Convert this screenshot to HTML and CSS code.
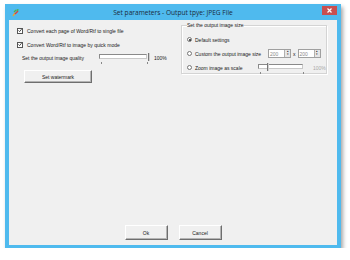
FILE: index.html
```html
<!DOCTYPE html>
<html lang="en">
<head>
    <meta charset="utf-8">
    <title>Set parameters - Output tpye: JPEG File</title>
    <link rel="stylesheet" href="styles.css">
</head>
<body>

    <div class="window">
        <div class="titlebar">
            <svg class="app-icon" width="8" height="8" viewBox="0 0 8 8">
                <path d="M1 7 L3 4" stroke="#e2a23a" stroke-width="1.4"/>
                <path d="M3 5 L6 2" stroke="#d9453b" stroke-width="1.4"/>
                <path d="M4.5 1.5 L6.5 0.5" stroke="#4caf50" stroke-width="1.4"/>
                <path d="M2 3 L4 1" stroke="#4caf50" stroke-width="1.2"/>
            </svg>
            <span class="title">Set parameters - Output tpye: JPEG File</span>
            <span class="close">
                <svg width="5" height="5" viewBox="0 0 5 5">
                    <path d="M0.5 0.5 L4.5 4.5 M4.5 0.5 L0.5 4.5" stroke="#fff" stroke-width="1.2"/>
                </svg>
            </span>
        </div>

        <div class="content">
            <div class="panes">
                <div class="left">
                    <div class="check-row">
                        <span class="checkbox"><svg width="5" height="5" viewBox="0 0 5 5"><path d="M0.6 2.4 L2 3.9 L4.5 0.8" stroke="#222" stroke-width="1" fill="none"/></svg></span>
                        <span>Convert each page of Word/Rtf to single file</span>
                    </div>
                    <div class="check-row second">
                        <span class="checkbox"><svg width="5" height="5" viewBox="0 0 5 5"><path d="M0.6 2.4 L2 3.9 L4.5 0.8" stroke="#222" stroke-width="1" fill="none"/></svg></span>
                        <span>Convert Word/Rtf to image by quick mode</span>
                    </div>
                    <div class="quality-row">
                        <span class="quality-label">Set the output image quality</span>
                        <div class="slider quality">
                            <div class="track"></div>
                            <span class="thumb at-end"></span>
                            <span class="tick left-tick"></span>
                            <span class="tick right-tick"></span>
                        </div>
                        <span class="value">100%</span>
                    </div>
                    <button class="btn watermark">Set watermark</button>
                </div>

                <div class="group">
                    <span class="legend">Set the output image size</span>
                    <div class="radio-row first">
                        <span class="radio checked"></span>
                        <span>Default settings</span>
                    </div>
                    <div class="radio-row">
                        <span class="radio"></span>
                        <span class="radio-text custom">Custom the output image size</span>
                        <span class="spin"><span class="spin-val">200</span><span class="spin-btn">&#9652;<br>&#9662;</span></span>
                        <span class="times">x</span>
                        <span class="spin"><span class="spin-val">200</span><span class="spin-btn">&#9652;<br>&#9662;</span></span>
                    </div>
                    <div class="radio-row">
                        <span class="radio"></span>
                        <span class="radio-text zoom">Zoom image as scale</span>
                        <div class="slider scale">
                            <div class="track"></div>
                            <span class="thumb near-start"></span>
                            <span class="tick left-tick"></span>
                            <span class="tick right-tick"></span>
                        </div>
                        <span class="value muted">100%</span>
                    </div>
                </div>
            </div>

            <div class="actions">
                <button class="btn action">Ok</button>
                <button class="btn action">Cancel</button>
            </div>
        </div>
    </div>

</body>
</html>
```

FILE: styles.css
```css
* {
    margin: 0;
    padding: 0;
    box-sizing: border-box;
}

body {
    font-family: 'Liberation Sans', Arial, sans-serif;
    background-color: #ffffff;
    color: #1a1a1a;
    overflow: hidden;
    white-space: nowrap;
}

.window {
    margin: 4px 0 0 5px;
    width: 336px;
    height: 244px;
    background-color: #4fbaee;
    display: flex;
    flex-direction: column;
    box-shadow: 2px 3px 4px rgba(0, 0, 0, 0.35);
}

.titlebar {
    height: 16px;
    display: flex;
    align-items: flex-start;
    position: relative;
}

.app-icon {
    margin: 5px 0 0 7px;
}

.title {
    position: absolute;
    left: 0;
    right: 0;
    top: 4px;
    text-align: center;
    font-family: 'Open Sans', 'Liberation Sans', sans-serif;
    font-size: 6.6px;
    color: #1b2a3a;
}

.close {
    margin: 2px 4px 0 auto;
    width: 15px;
    height: 9px;
    background-color: #c94f4f;
    display: flex;
    align-items: center;
    justify-content: center;
    position: relative;
}

.content {
    flex: 1;
    margin: 0 4px 3px 4px;
    background-color: #f0f0f0;
    display: flex;
    flex-direction: column;
    font-size: 5px;
}

.panes {
    display: flex;
    flex: 1;
}

.left {
    width: 172px;
    padding: 7px 0 0 8px;
}

.check-row {
    display: flex;
    align-items: center;
    height: 7px;
    gap: 4px;
}

.check-row.second {
    margin-top: 7px;
}

.checkbox {
    width: 6px;
    height: 6px;
    border: 1px solid #555;
    background-color: #fff;
    display: flex;
    align-items: center;
    justify-content: center;
}

.quality-row {
    display: flex;
    align-items: center;
    height: 9px;
    margin-top: 5px;
    padding-left: 5px;
}

.quality-label {
    width: 77px;
}

.slider {
    position: relative;
    height: 9px;
}

.slider.quality {
    width: 51px;
}

.slider.scale {
    width: 48px;
}

.track {
    position: absolute;
    left: 0;
    right: 3px;
    top: 1px;
    height: 5px;
    background-color: #fff;
    border: 1px solid #c8c8c8;
    border-top-color: #8a8a8a;
    border-left-color: #8a8a8a;
}

.thumb {
    position: absolute;
    top: 0;
    width: 2px;
    height: 8px;
    background-color: #fdfdfd;
    border-left: 1px solid #777;
    border-right: 1px solid #d0d0d0;
}

.thumb.at-end {
    right: 0;
}

.thumb.near-start {
    left: 9px;
}

.tick {
    position: absolute;
    top: 9px;
    width: 1px;
    height: 2px;
    background-color: #888;
}

.left-tick {
    left: 2px;
}

.right-tick {
    right: 2px;
}

.value {
    margin-left: 4px;
}

.value.muted {
    color: #a8a8a8;
}

.btn {
    font-family: 'Liberation Sans', Arial, sans-serif;
    font-size: 5px;
    color: #1a1a1a;
    background-color: #f0f0f0;
    border: 1px solid;
    border-color: #ffffff #6e6e6e #6e6e6e #ffffff;
    box-shadow: inset -1px -1px 0 #b4b4b4;
}

.watermark {
    display: block;
    width: 68px;
    height: 13px;
    margin: 8px 0 0 7px;
}

.group {
    width: 146px;
    height: 49px;
    margin-top: 5px;
    border: 1px solid #d4d4d4;
    box-shadow: inset 1px 1px 0 #fff, 1px 1px 0 #fff;
    padding: 0 0 0 5px;
}

.legend {
    display: inline-block;
    margin-top: -4px;
    background-color: #f0f0f0;
    padding-right: 1px;
    line-height: 6px;
    vertical-align: top;
}

.radio-row {
    display: flex;
    align-items: center;
    height: 9px;
    margin-top: 5px;
    gap: 3px;
}

.radio-row.first {
    margin-top: 3px;
}

.radio {
    width: 5px;
    height: 5px;
    border-radius: 50%;
    border: 1px solid #777;
    background-color: #fff;
    display: flex;
    align-items: center;
    justify-content: center;
}

.radio.checked::after {
    content: "";
    width: 2px;
    height: 2px;
    border-radius: 50%;
    background-color: #222;
}

.radio-text.custom {
    width: 70px;
}

.radio-text.zoom {
    width: 60px;
}

.spin {
    width: 23px;
    height: 9px;
    background-color: #fff;
    border: 1px solid #a0a0a0;
    display: flex;
    align-items: center;
    justify-content: space-between;
}

.spin-val {
    color: #8a8a8a;
    padding-left: 1px;
}

.spin-btn {
    width: 6px;
    height: 7px;
    font-size: 3px;
    line-height: 3px;
    text-align: center;
    background-color: #e6e6e6;
    border-left: 1px solid #b0b0b0;
    color: #222;
}

.times {
    margin: 0 -1px;
}

.actions {
    display: flex;
    justify-content: center;
    gap: 11px;
    padding-bottom: 5px;
}

.action {
    width: 43px;
    height: 15px;
}
```
